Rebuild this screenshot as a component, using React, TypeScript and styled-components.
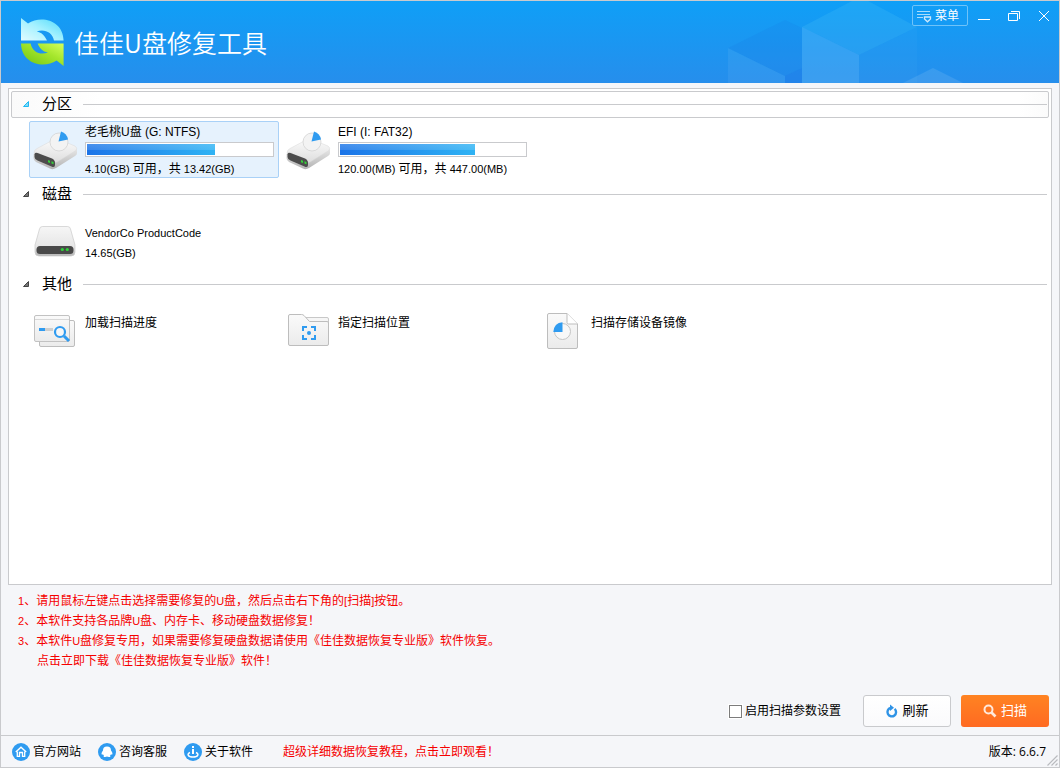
import React, { useState } from "react";
import styled, { createGlobalStyle, css } from "styled-components";

const GlobalStyle = createGlobalStyle`
  *, *::before, *::after { box-sizing: border-box; }
  body {
    margin: 0;
    font-family: "Liberation Sans", "Noto Sans CJK SC", sans-serif;
    font-size: 12px;
    color: #000;
  }
  button, input { font: inherit; color: inherit; margin: 0; }
  button { padding: 0; border: 0; background: none; cursor: pointer; }
  h1, h2, p, ul { margin: 0; padding: 0; font-weight: 400; }
  a { color: inherit; text-decoration: none; }
  svg { display: block; flex: none; }
`;

const line = "#c9cacd";
const red = "#f50000";

const Window = styled.div`
  display: flex;
  flex-direction: column;
  min-height: 100vh;
  border: 1px solid ${line};
  background: #f5f6f9;
`;

const Header = styled.header`
  position: relative;
  display: flex;
  justify-content: space-between;
  height: 82px;
  background: linear-gradient(#0f9ff7, #268eec);
`;

const HeaderArt = styled.svg`
  position: absolute;
  top: 0;
  right: 91px;
`;

const Brand = styled.div`
  display: flex;
  align-items: center;
  gap: 9px;
  padding-left: 20px;
`;

const BrandName = styled.h1`
  font-family: "Noto Sans CJK SC", sans-serif;
  font-size: 25px;
  line-height: 36px;
  font-weight: 350;
  color: #fff;
`;

const WindowControls = styled.div`
  position: relative;
  display: flex;
  align-items: flex-start;
  padding-top: 4px;
`;

const MenuButton = styled.button`
  display: flex;
  align-items: center;
  gap: 3px;
  width: 56px;
  height: 21px;
  margin-right: 1px;
  padding: 2px 0 0 4px;
  border: 1px solid #6fc3f9;
  border-radius: 2px;
  color: #fff;
  line-height: 17px;
`;

const ControlButton = styled.button`
  display: flex;
  align-items: center;
  justify-content: center;
  width: 30px;
  height: 22px;
`;

const Main = styled.main`
  display: flex;
  flex: 1;
  flex-direction: column;
  padding-top: 5px;
`;

const Panel = styled.div`
  display: flex;
  flex: 1;
  flex-direction: column;
  gap: 3px;
  margin: 0 7px;
  padding: 2px;
  border: 1px solid ${line};
  background: #fff;
`;

const Group = styled.section`
  display: flex;
  flex-direction: column;
  gap: 3px;
`;

const GroupHeader = styled.div<{ $active: boolean }>`
  display: flex;
  align-items: center;
  gap: 11px;
  height: 27px;
  padding-right: 1px;
  border: 1px solid transparent;
  border-radius: 2px;
  ${(p) =>
    p.$active &&
    css`
      border-color: ${line};
      background: linear-gradient(90deg, #fafafa, #fff 90px, #fff calc(100% - 30px), #fbfbfb);
    `}
`;

const GroupToggle = styled.button`
  display: flex;
  align-items: center;
  gap: 12px;
  padding: 0 0 2px 10px;
`;

const GroupTitle = styled.h2`
  font-size: 15px;
  line-height: 22px;
`;

const GroupRule = styled.span`
  flex: 1;
  height: 1px;
  background: ${line};
`;

const ItemGrid = styled.div`
  display: grid;
  grid-template-columns: repeat(auto-fill, 250px);
  gap: 3px;
  padding-left: 18px;
`;

const Item = styled.button<{ $selected?: boolean }>`
  display: flex;
  height: 57px;
  border: 1px solid ${(p) => (p.$selected ? "#a9d1f7" : "transparent")};
  border-radius: 2px;
  background: ${(p) => (p.$selected ? "#e6f2fd" : "transparent")};
  text-align: left;
`;

const ItemBody = styled.span<{ $lowered?: boolean }>`
  display: block;
  flex: 1;
  padding: ${(p) => (p.$lowered ? "11px" : "0")} 4px 0 0;
`;

const ItemText = styled.span<{ $size?: number }>`
  display: block;
  font-size: ${(p) => p.$size ?? 12}px;
  line-height: 20px;
  white-space: nowrap;
`;

const UsageText = styled.span`
  display: block;
  margin-top: 4px;
  font-size: 11px;
  line-height: 16px;
  white-space: nowrap;
`;

const Han = styled.span`
  font-size: 12px;
  line-height: 1;
`;

const Meter = styled.span`
  display: block;
  height: 15px;
  padding: 1px;
  border: 1px solid ${line};
  background: #fff;
`;

const MeterFill = styled.span`
  display: block;
  height: 11px;
  background:
    linear-gradient(rgba(255, 255, 255, 0.2), rgba(255, 255, 255, 0.12)) top / 100% 6px no-repeat,
    linear-gradient(90deg, #1b74e8, #2fb3f4);
`;

const Notes = styled.ul`
  padding: 6px 17px 0;
  color: ${red};
  line-height: 20px;
  list-style: none;
`;

const Note = styled.li<{ $indent?: boolean }>`
  padding-left: ${(p) => (p.$indent ? "19px" : "0")};
`;

const Latin = styled.span`
  font-size: 11px;
  line-height: 1;
`;

const Actions = styled.div`
  display: flex;
  align-items: center;
  justify-content: flex-end;
  gap: 10px;
  padding: 24px 10px 8px;
`;

const Option = styled.label`
  display: flex;
  align-items: center;
  gap: 3px;
  margin-right: 12px;
  line-height: 20px;
`;

const CheckBox = styled.input`
  appearance: none;
  width: 13px;
  height: 13px;
  border: 1px solid #7c7c7c;
  background: #fff;
  outline: 1px solid #fff;
  &:checked {
    background: #2a94ee;
    box-shadow: inset 0 0 0 2px #fff;
  }
`;

const ActionButton = styled.button<{ $primary?: boolean }>`
  display: flex;
  align-items: center;
  justify-content: center;
  gap: 4px;
  width: 88px;
  height: 32px;
  border-radius: 3px;
  font-size: 13px;
  line-height: 20px;
  ${(p) =>
    p.$primary
      ? css`
          background: linear-gradient(#ff8322, #ff6a22);
          color: #fff;
        `
      : css`
          border: 1px solid ${line};
          background: linear-gradient(#fff, #fafafc);
        `}
`;

const StatusBar = styled.footer`
  position: relative;
  display: flex;
  align-items: center;
  height: 32px;
  padding: 0 13px 0 11px;
  border-top: 1px solid ${line};
  line-height: 20px;
`;

const StatusLinks = styled.nav`
  display: flex;
  gap: 17px;
`;

const StatusLink = styled.a`
  display: flex;
  align-items: center;
  gap: 3px;
`;

const Promo = styled.a`
  margin-left: 30px;
  color: ${red};
`;

const Version = styled.span`
  margin-left: auto;
  font-family: "Open Sans", "Noto Sans CJK SC", sans-serif;
`;

const Grip = styled.svg`
  position: absolute;
  right: 1px;
  bottom: 1px;
`;

const arrowPath =
  "M0 0 L7 5.500 C20 -3 42 2 42.600 22.600 H33 C31.500 14 23 10.500 15.700 13.500 C21 14.500 24 18 26 22.600 H0 Z";

const Logo = () => (
  <svg width="44" height="48" viewBox="0 0 44 48" aria-hidden="true">
    <defs>
      <linearGradient id="logoTop" x1="0" y1="1" x2="1" y2="0">
        <stop offset="0" stopColor="#e2fcff" />
        <stop offset="0.5" stopColor="#a4f1ff" />
        <stop offset="1" stopColor="#4ad9fb" />
      </linearGradient>
      <linearGradient id="logoBottom" x1="0" y1="1" x2="1" y2="0">
        <stop offset="0" stopColor="#d4ff5c" />
        <stop offset="0.4" stopColor="#a5e62c" />
        <stop offset="1" stopColor="#6cc410" />
      </linearGradient>
    </defs>
    <path fill="url(#logoTop)" d={arrowPath} />
    <path fill="url(#logoBottom)" transform="rotate(180 21.300 24)" d={arrowPath} />
  </svg>
);

const Cubes = () => (
  <HeaderArt width="240" height="82" viewBox="0 1 240 82" aria-hidden="true">
    <path d="M0 48 L57 20 L74 28 V68 L57 76 Z" fill="#1668e0" fillOpacity="0.12" />
    <path d="M57 76 L74 68 V83 H57 Z" fill="#1a6ce4" fillOpacity="0.3" />
    <path d="M0 48 L57 76 V83 H0 Z" fill="#fff" fillOpacity="0.06" />
    <path d="M74 27 L124 1 H140 L189 27 L131 55 Z" fill="#4cc4f6" fillOpacity="0.22" />
    <path d="M74 27 L131 55 V83 H74 Z" fill="#7cc8fa" fillOpacity="0.26" />
    <path d="M131 55 L189 27 V83 H131 Z" fill="#4fb2f8" fillOpacity="0.1" />
    <path d="M175 83 L205 68 L235 83 Z" fill="#fff" fillOpacity="0.1" />
  </HeaderArt>
);

const Triangle = ({ active }: { active: boolean }) => (
  <svg width="8" height="8" viewBox="0 0 8 8" aria-hidden="true">
    <path
      d="M6.500 1.500 V6.500 H1.500 Z"
      fill={active ? "#7fdcfa" : "#777"}
      stroke={active ? "#1fb8f2" : "#444"}
    />
  </svg>
);

const PartitionIcon = () => (
  <svg width="55" height="55" viewBox="0 0 55 55" aria-hidden="true">
    <defs>
      <linearGradient id="pTop" x1="0" y1="0" x2="0" y2="1">
        <stop offset="0" stopColor="#fbfbfb" />
        <stop offset="1" stopColor="#dedede" />
      </linearGradient>
      <linearGradient id="pSide" x1="0" y1="0" x2="0" y2="1">
        <stop offset="0" stopColor="#e6e6e6" />
        <stop offset="1" stopColor="#b4b4b4" />
      </linearGradient>
    </defs>
    <path d="M3.500 32 L8 29 L47 27 V31 Q47 33 45 34 L26 46 Q23 48 20 46.500 L6 40 Q3.500 38.500 3.500 36 Z" fill="url(#pSide)" />
    <path d="M4 31 Q4 28 7 26.500 L23 18 Q26 16.500 29 17.500 L45 24 Q48 26 46 28.500 L27 40 Q24 41 21 38 L8 31 Z" fill="url(#pTop)" stroke="#d8d8d8" strokeWidth="0.500" />
    <path d="M4.500 32.500 Q4.500 30 7.500 31 L22 36.500 Q25 38 25 41 V43 Q25 46 21.500 44.500 L7.500 38.500 Q4.500 37 4.500 35 Z" fill="#4c4c4c" />
    <path d="M18 38 L20 38.700 V41 L18 40.200 Z M21.500 39.300 L23.500 40 V42.300 L21.500 41.500 Z" fill="#35d43a" />
    <circle cx="29" cy="20" r="9" fill="#f3f3f3" stroke="#cfcfcf" strokeWidth="0.700" />
    <path d="M28.500 19.500 L31 9.500 Q37 11.500 38 17.500 Z" fill="#2f9bf0" />
  </svg>
);

const DiskIcon = () => (
  <svg width="55" height="55" viewBox="0 0 55 55" aria-hidden="true">
    <defs>
      <linearGradient id="dTop" x1="0" y1="0" x2="0" y2="1">
        <stop offset="0" stopColor="#f6f6f6" />
        <stop offset="0.700" stopColor="#e6e6e6" />
        <stop offset="1" stopColor="#b4b4b4" />
      </linearGradient>
    </defs>
    <path d="M12.500 14.500 H37.500 Q40 14.500 40.500 17 L45 33 V40 Q45 44 41 44 H9 Q5 44 5 40 V33 L9.500 17 Q10 14.500 12.500 14.500 Z" fill="url(#dTop)" stroke="#cacaca" strokeWidth="0.700" />
    <rect x="6.500" y="34" width="37" height="8" rx="3.500" fill="#494949" />
    <circle cx="32.300" cy="37.500" r="1.600" fill="#2fd23a" />
    <circle cx="37.300" cy="37.500" r="1.600" fill="#2fd23a" />
  </svg>
);

const PaperGradient = ({ id }: { id: string }) => (
  <defs>
    <linearGradient id={id} x1="0" y1="0" x2="0" y2="1">
      <stop offset="0" stopColor="#fafafa" />
      <stop offset="1" stopColor="#ebebeb" />
    </linearGradient>
  </defs>
);

const ProgressIcon = () => (
  <svg width="55" height="55" viewBox="0 0 55 55" aria-hidden="true">
    <PaperGradient id="paperA" />
    <rect x="9.500" y="18.500" width="35" height="26" rx="1.500" fill="url(#paperA)" stroke="#bdbdbd" />
    <rect x="4.500" y="13.500" width="35" height="26" rx="1.500" fill="url(#paperA)" stroke="#c2c2c2" />
    <path d="M5 17.500 H39" stroke="#d8d8d8" />
    <rect x="9" y="26" width="6" height="3" fill="#2f9bf0" />
    <rect x="15" y="26" width="8" height="3" fill="#cfcfcf" />
    <circle cx="30" cy="30" r="5" fill="#f6f6f6" stroke="#2f9bf0" strokeWidth="2.200" />
    <path d="M34 34 L39 39" stroke="#2f9bf0" strokeWidth="3" />
  </svg>
);

const FolderIcon = () => (
  <svg width="55" height="55" viewBox="0 0 55 55" aria-hidden="true">
    <PaperGradient id="paperB" />
    <path d="M20 15.500 H44 Q45.500 15.500 45.500 17 V24 H20 Z" fill="#f6f6f6" stroke="#c8c8c8" />
    <path d="M5.500 14 Q5.500 12.500 7 12.500 H18.500 Q20 12.500 21 13.500 L26.500 19.500 H44 Q45.500 19.500 45.500 21 V42 Q45.500 43.500 44 43.500 H7 Q5.500 43.500 5.500 42 Z" fill="url(#paperB)" stroke="#bdbdbd" />
    <path d="M20 29 V25 H24 M28 25 H32 V29 M32 33 V37 H28 M24 37 H20 V33" fill="none" stroke="#2f9bf0" strokeWidth="2" />
    <circle cx="26" cy="31" r="2" fill="#2f9bf0" />
  </svg>
);

const ImageFileIcon = () => (
  <svg width="55" height="55" viewBox="0 0 55 55" aria-hidden="true">
    <PaperGradient id="paperC" />
    <path d="M13 11.500 H31 L41.500 22 V45 Q41.500 46.500 40 46.500 H13 Q11.500 46.500 11.500 45 V13 Q11.500 11.500 13 11.500 Z" fill="url(#paperC)" stroke="#bdbdbd" />
    <path d="M31 11.500 V20.500 Q31 22 32.500 22 H41.500" fill="#fff" stroke="#bdbdbd" />
    <circle cx="26.500" cy="29.500" r="8" fill="#f8f8f8" stroke="#c4c4c4" />
    <path d="M26.500 30 H17.300 Q18 21 26.500 20.300 Z" fill="#2f9bf0" />
  </svg>
);

const HomeBadge = () => (
  <svg width="18" height="18" viewBox="0 0 18 18" aria-hidden="true">
    <circle cx="9" cy="9" r="9" fill="#2f9bf0" />
    <path d="M3.800 9 L9 4.300 L14.200 9" fill="none" stroke="#fff" strokeWidth="1.400" />
    <path d="M5.300 8.500 V13.300 H7.500 V9.500 H10.500 V13.300 H12.700 V8.500" fill="none" stroke="#fff" strokeWidth="1.300" />
  </svg>
);

const ChatBadge = () => (
  <svg width="18" height="18" viewBox="0 0 18 18" aria-hidden="true">
    <circle cx="9" cy="9" r="9" fill="#2f9bf0" />
    <path d="M9 3.500 C11.800 3.500 13 5 13 7.500 C14 9 14.800 10.300 14.300 11.500 C13.800 11.800 13.500 11.500 13 11.300 C12.800 12 12.500 12.400 12 12.700 C12.800 13.300 12.500 14 11 14 C10 14 9.500 13.800 9 13.500 C8.500 13.800 8 14 7 14 C5.500 14 5.200 13.300 6 12.700 C5.500 12.400 5.200 12 5 11.300 C4.500 11.500 4.200 11.800 3.700 11.500 C3.200 10.300 4 9 5 7.500 C5 5 6.200 3.500 9 3.500 Z" fill="#fff" />
  </svg>
);

const InfoBadge = () => (
  <svg width="18" height="18" viewBox="0 0 18 18" aria-hidden="true">
    <circle cx="9" cy="9" r="9" fill="#2f9bf0" />
    <rect x="8" y="3" width="2" height="2" fill="#fff" />
    <rect x="8" y="6" width="2" height="5" fill="#fff" />
    <path d="M6 9.500 C2.500 11 4 14 9 14 C14 14 15.500 11 12 9.500" fill="none" stroke="#fff" strokeWidth="1.500" />
  </svg>
);

const usageItems = [
  { title: "老毛桃U盘 (G: NTFS)", free: "4.10(GB)", total: "13.42(GB)", used: 1 - 4.1 / 13.42 },
  { title: "EFI (I: FAT32)", free: "120.00(MB)", total: "447.00(MB)", used: 1 - 120 / 447 },
];

const otherItems = [
  { title: "加载扫描进度", Icon: ProgressIcon },
  { title: "指定扫描位置", Icon: FolderIcon },
  { title: "扫描存储设备镜像", Icon: ImageFileIcon },
];

const links = [
  { label: "官方网站", Icon: HomeBadge },
  { label: "咨询客服", Icon: ChatBadge },
  { label: "关于软件", Icon: InfoBadge },
];

function DeviceGroup({
  title,
  active = false,
  children,
}: {
  title: string;
  active?: boolean;
  children: React.ReactNode;
}) {
  const [open, setOpen] = useState(true);
  return (
    <Group>
      <GroupHeader $active={active}>
        <GroupToggle type="button" aria-expanded={open} onClick={() => setOpen(!open)}>
          <Triangle active={active} />
          <GroupTitle>{title}</GroupTitle>
        </GroupToggle>
        <GroupRule />
      </GroupHeader>
      {open && <ItemGrid>{children}</ItemGrid>}
    </Group>
  );
}

export default function App() {
  const [selected, setSelected] = useState(0);
  return (
    <Window>
      <GlobalStyle />
      <Header>
        <Cubes />
        <Brand>
          <Logo />
          <BrandName>佳佳U盘修复工具</BrandName>
        </Brand>
        <WindowControls>
          <MenuButton type="button">
            <svg width="15" height="13" viewBox="0 0 15 13" aria-hidden="true">
              <path d="M0 1.500 H13 M0 4.500 H13 M0 7.500 H6" stroke="#a9dcfc" strokeWidth="1.200" />
              <path d="M7.500 7 H13.500 V9 L10.500 11.800 L7.500 9 Z" fill="none" stroke="#cfeafd" strokeWidth="1.300" />
            </svg>
            菜单
          </MenuButton>
          <ControlButton type="button" aria-label="最小化">
            <svg width="12" height="12" viewBox="0 0 12 12" aria-hidden="true">
              <path d="M0 9.500 H12" stroke="#fff" />
            </svg>
          </ControlButton>
          <ControlButton type="button" aria-label="还原">
            <svg width="12" height="12" viewBox="0 0 12 12" aria-hidden="true">
              <path d="M0.500 3.500 H9.500 V10.500 H0.500 Z M3 1.500 H11.500 V9" fill="none" stroke="#fff" />
            </svg>
          </ControlButton>
          <ControlButton type="button" aria-label="关闭">
            <svg width="12" height="12" viewBox="0 0 12 12" aria-hidden="true">
              <path d="M1 1 L11 11 M11 1 L1 11" stroke="#fff" />
            </svg>
          </ControlButton>
        </WindowControls>
      </Header>

      <Main>
        <Panel>
          <DeviceGroup title="分区" active>
            {usageItems.map((item, i) => (
              <Item
                key={item.title}
                type="button"
                $selected={selected === i}
                aria-pressed={selected === i}
                onClick={() => setSelected(i)}
              >
                <PartitionIcon />
                <ItemBody>
                  <ItemText>{item.title}</ItemText>
                  <Meter>
                    <MeterFill style={{ width: `${item.used * 100}%` }} />
                  </Meter>
                  <UsageText>
                    {item.free} <Han>可用，共</Han> {item.total}
                  </UsageText>
                </ItemBody>
              </Item>
            ))}
          </DeviceGroup>
          <DeviceGroup title="磁盘">
            <Item type="button">
              <DiskIcon />
              <ItemBody $lowered>
                <ItemText $size={11}>VendorCo ProductCode</ItemText>
                <ItemText $size={11}>14.65(GB)</ItemText>
              </ItemBody>
            </Item>
          </DeviceGroup>
          <DeviceGroup title="其他">
            {otherItems.map(({ title, Icon }) => (
              <Item key={title} type="button">
                <Icon />
                <ItemBody $lowered>
                  <ItemText>{title}</ItemText>
                </ItemBody>
              </Item>
            ))}
          </DeviceGroup>
        </Panel>

        <Notes>
          <Note>
            <Latin>1</Latin>、请用鼠标左键点击选择需要修复的<Latin>U</Latin>盘，然后点击右下角的
            <Latin>[</Latin>扫描<Latin>]</Latin>按钮。
          </Note>
          <Note>
            <Latin>2</Latin>、本软件支持各品牌<Latin>U</Latin>盘、内存卡、移动硬盘数据修复！
          </Note>
          <Note>
            <Latin>3</Latin>、本软件<Latin>U</Latin>盘修复专用，如果需要修复硬盘数据请使用《佳佳数据恢复专业版》软件恢复。
          </Note>
          <Note $indent>
            <a href="#download">点击立即下载《佳佳数据恢复专业版》软件！</a>
          </Note>
        </Notes>

        <Actions>
          <Option>
            <CheckBox type="checkbox" />
            启用扫描参数设置
          </Option>
          <ActionButton type="button">
            <svg width="13" height="14" viewBox="0 0 13 14" aria-hidden="true">
              <path d="M9.600 4.800 A4.300 4.300 0 1 1 5.600 3.900" fill="none" stroke="#2f93e6" strokeWidth="2.400" />
              <path d="M5 0.500 L9 3.700 L5 7 Z" fill="#2f93e6" />
            </svg>
            刷新
          </ActionButton>
          <ActionButton type="button" $primary>
            <svg width="14" height="14" viewBox="0 0 14 14" aria-hidden="true">
              <circle cx="5.500" cy="5.500" r="4" fill="none" stroke="#ffe9dc" strokeWidth="2" />
              <path d="M8.500 8.500 L12.500 12.500" stroke="#ffe9dc" strokeWidth="2.600" />
            </svg>
            扫描
          </ActionButton>
        </Actions>
      </Main>

      <StatusBar>
        <StatusLinks>
          {links.map(({ label, Icon }) => (
            <StatusLink key={label} href="#about">
              <Icon />
              {label}
            </StatusLink>
          ))}
        </StatusLinks>
        <Promo href="#tutorial">超级详细数据恢复教程，点击立即观看！</Promo>
        <Version>版本: 6.6.7</Version>
        <Grip width="11" height="11" viewBox="0 0 11 11" aria-hidden="true">
          <path d="M0.500 10.500 L10.500 0.500 M4.500 10.500 L10.500 4.500 M8.500 10.500 L10.500 8.500" stroke="#b9bbbf" strokeWidth="1.200" />
        </Grip>
      </StatusBar>
    </Window>
  );
}
